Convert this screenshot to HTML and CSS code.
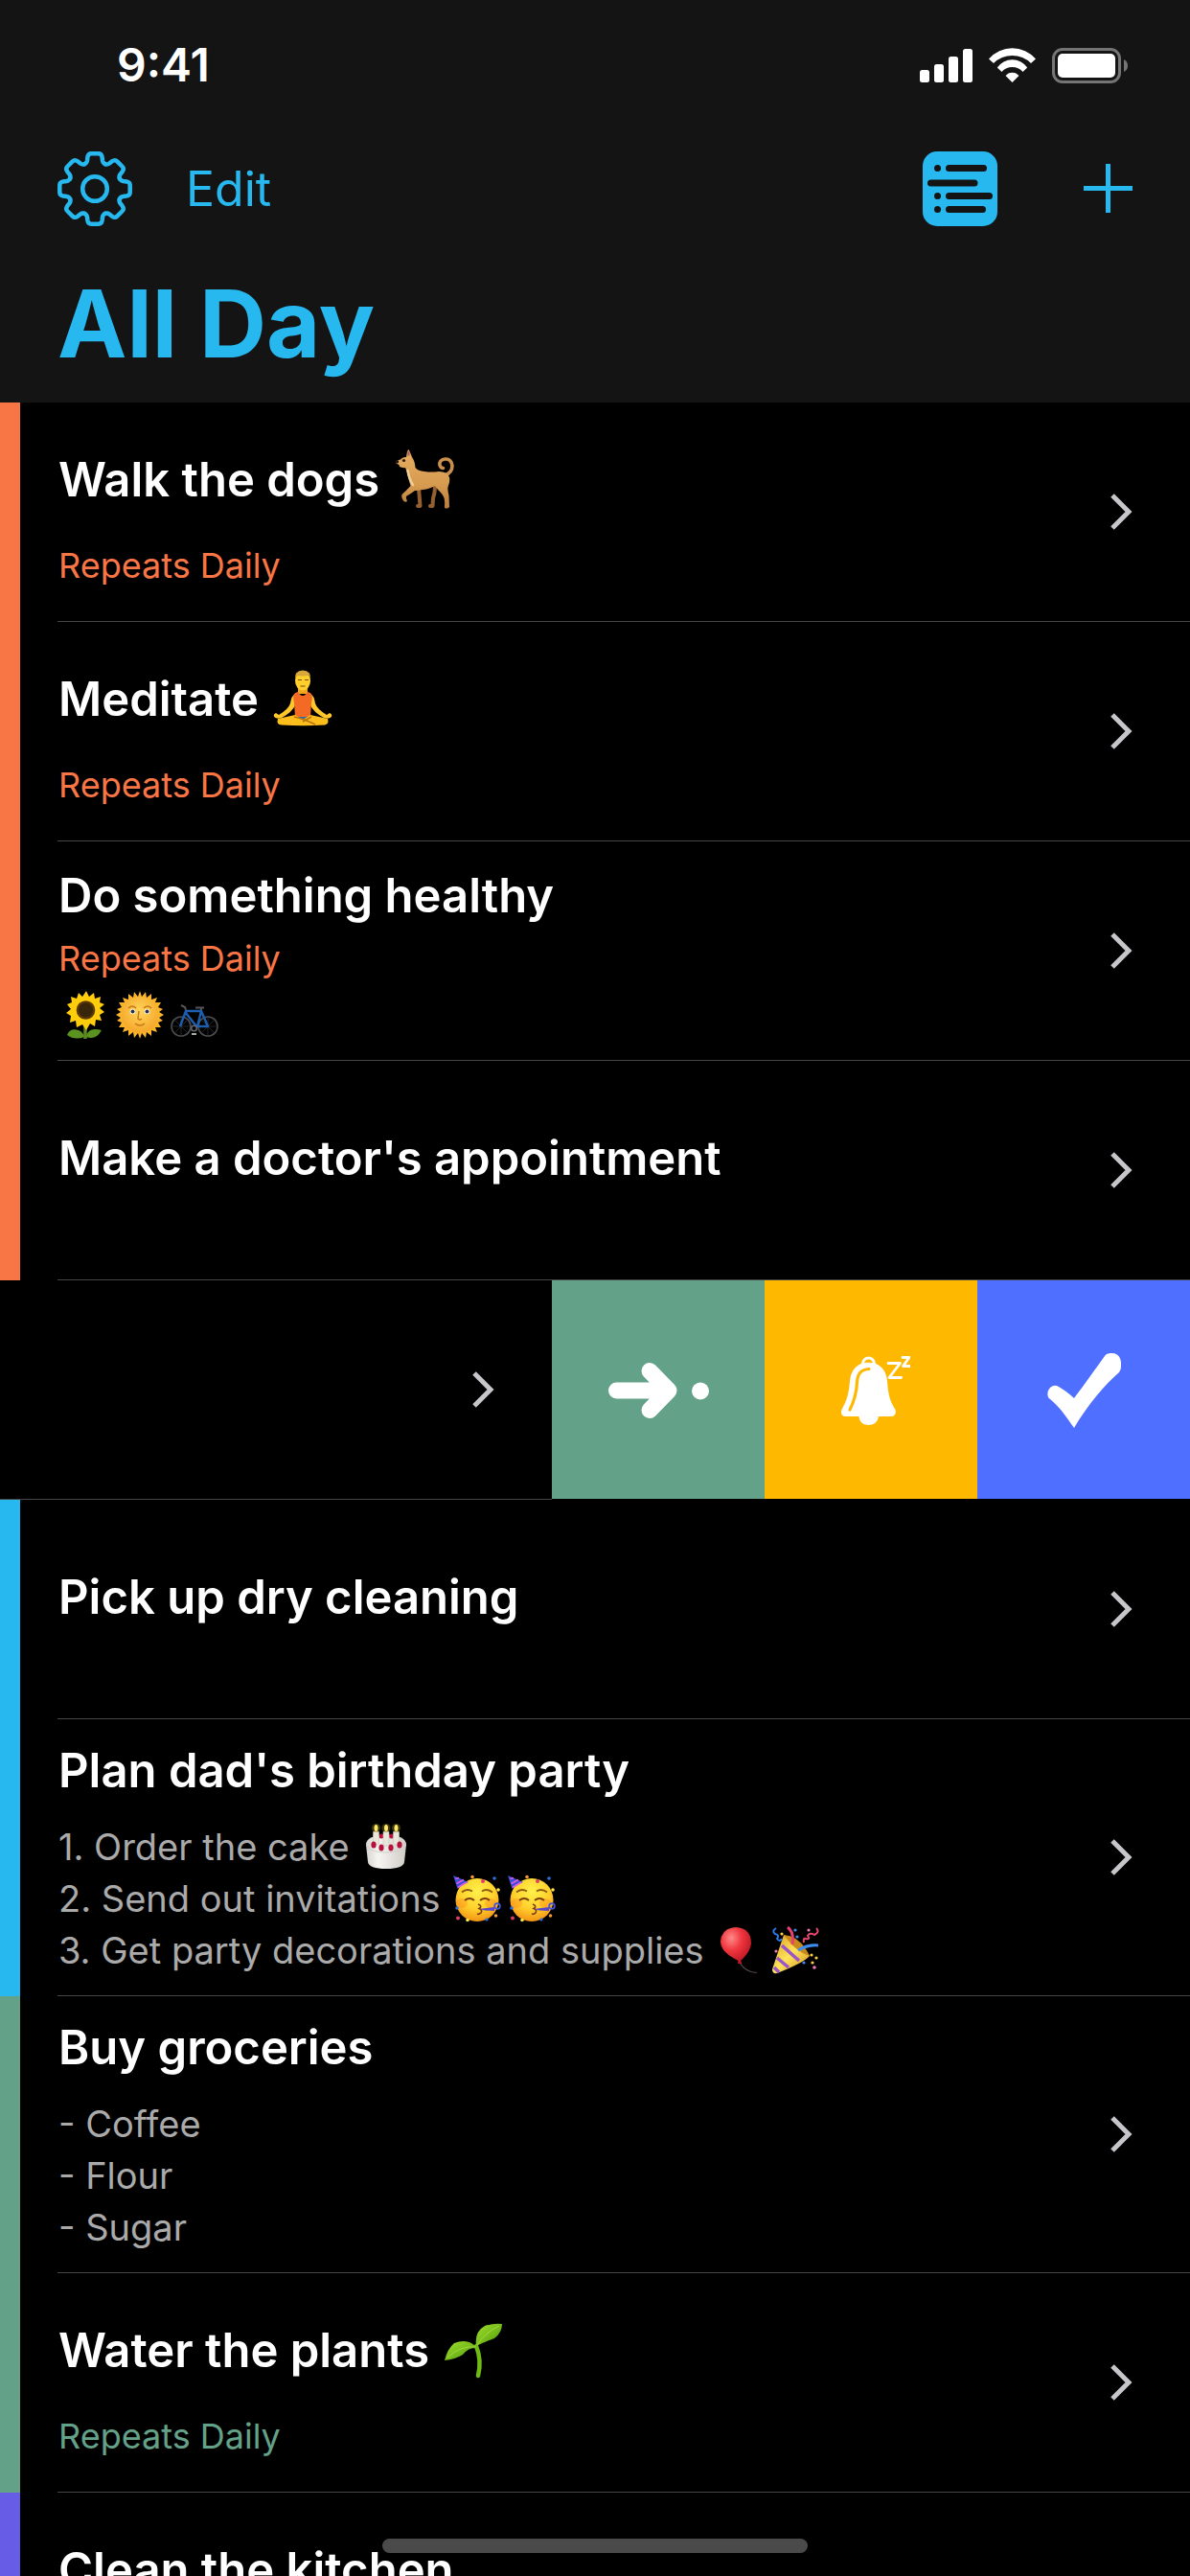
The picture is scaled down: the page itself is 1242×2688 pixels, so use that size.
FILE: index.html
```html
<!DOCTYPE html>
<html lang="en">
<head>
<meta charset="utf-8">
<meta name="viewport" content="width=device-width, initial-scale=1">
<title>All Day</title>
<link rel="stylesheet" href="styles.css">
</head>
<body>
<svg class="sprite" aria-hidden="true">
  <defs>
    <symbol id="chevron" viewBox="0 0 24 40">
      <path d="M3 3 L20 20 L3 37" fill="none" stroke="#c7c7cb" stroke-width="5"/>
    </symbol>
    <g id="gear-tooth">
      <path d="M-10.8 -25.8 C-9 -26.6 -8.3 -27.5 -8 -29.5 L-7.6 -33 Q-7 -36.7 -3.8 -36.7 H3.8 Q7 -36.7 7.6 -33 L8 -29.5 C8.3 -27.5 9 -26.6 10.8 -25.8"/>
    </g>
    <radialGradient id="skin" cx=".5" cy=".3" r=".75">
      <stop offset="0" stop-color="#fff04a"/><stop offset=".55" stop-color="#ffd02c"/><stop offset="1" stop-color="#f28a12"/>
    </radialGradient>
    <linearGradient id="fur" x1="0" y1="0" x2="0" y2="1">
      <stop offset="0" stop-color="#e5ae62"/><stop offset=".6" stop-color="#d79b50"/><stop offset="1" stop-color="#b87b3c"/>
    </linearGradient>
    <linearGradient id="leaf" x1="0" y1="0" x2="1" y2="1">
      <stop offset="0" stop-color="#a3e02c"/><stop offset="1" stop-color="#4c9a0c"/>
    </linearGradient>
    <radialGradient id="balloon-red" cx=".35" cy=".3" r=".75">
      <stop offset="0" stop-color="#ff8a8a"/><stop offset=".45" stop-color="#f0373f"/><stop offset="1" stop-color="#b91423"/>
    </radialGradient>
    <radialGradient id="sun-face" cx=".5" cy=".4" r=".6">
      <stop offset="0" stop-color="#ffd65a"/><stop offset="1" stop-color="#f5a62a"/>
    </radialGradient>
    <linearGradient id="icing" x1="0" y1="0" x2="1" y2="0">
      <stop offset="0" stop-color="#d6d3cf"/><stop offset=".3" stop-color="#f6f5f2"/><stop offset="1" stop-color="#cfccc6"/>
    </linearGradient>
    <linearGradient id="cone" x1="0" y1="0" x2="1" y2="1">
      <stop offset="0" stop-color="#d99a1e"/><stop offset=".5" stop-color="#ffe35a"/><stop offset="1" stop-color="#d28c1c"/>
    </linearGradient>
    <symbol id="partying" viewBox="0 0 50 50">
      <ellipse cx="25" cy="26.500" rx="22.500" ry="22.500" fill="url(#skin)"/>
      <ellipse cx="9" cy="30" rx="6" ry="5" fill="#ff8a1c" opacity=".4"/>
      <ellipse cx="39" cy="30" rx="6" ry="5" fill="#ff8a1c" opacity=".4"/>
      <path d="M0 1 L16 8 Q8 11 4.500 15 Z" fill="#3b4fd8"/>
      <path d="M2.500 4.500 L6 3.500 M3.500 9.500 L11 5.500 M5 13.500 L14 8" stroke="#e05be0" stroke-width="1.800"/>
      <path d="M9 18.500 Q14 14 20 17.500 M30 17.500 Q35 14 41 18.500" fill="none" stroke="#8a5a12" stroke-width="1.800"/>
      <path d="M12 27 Q17 23 22 27 M28 27 Q33 23 38 27" fill="none" stroke="#7a3d0c" stroke-width="2"/>
      <path d="M26 31 Q31 33 27 35.500 Q31 37 29 40 Q27 42 25 41" fill="none" stroke="#7a3d0c" stroke-width="1.600"/>
      <path d="M27 36 L43 34 V38 L33 37.500 Z" fill="#5a46c8"/>
      <circle cx="46" cy="33" r="2.800" fill="none" stroke="#4656d8" stroke-width="1.800"/>
      <g fill="#e03c6a"><circle cx="31" cy="7" r="2"/><circle cx="5" cy="45.500" r="2"/></g>
      <g fill="#2d6fe0"><circle cx="43" cy="4" r="1.800"/><circle cx="4" cy="35" r="1.800"/><circle cx="35" cy="47" r="1.600"/></g>
      <g fill="#ffe84a"><circle cx="47" cy="16" r="1.800"/><circle cx="15" cy="47.500" r="1.800"/></g>
      <g fill="#f59a35"><circle cx="20" cy="2.500" r="1.800"/><circle cx="44.500" cy="43" r="1.800"/></g>
    </symbol>
  </defs>
</svg>

<div class="screen">
  <header class="header">
    <div class="status">
      <time class="status__time">9:41</time>
      <div class="status__icons">
        <svg width="55" height="37" viewBox="0 0 55 37" fill="#fff" role="img" aria-label="Signal">
          <rect x="0" y="23" width="10" height="13" rx="2.500"/><rect x="15" y="17" width="10" height="19" rx="2.500"/>
          <rect x="30" y="9" width="10" height="27" rx="2.500"/><rect x="45" y="1" width="10" height="35" rx="2.500"/>
        </svg>
        <svg width="49" height="37" viewBox="0 0 49 37" fill="#fff" role="img" aria-label="Wi-Fi">
          <path d="M0 11.500 A32.500 32.500 0 0 1 49 11.500 L44 16 A27.800 27.800 0 0 0 5 16 Z"/>
          <path d="M8.800 20.500 A19 19 0 0 1 40.200 20.500 L35.500 25 A14.600 14.600 0 0 0 13.500 25 Z"/>
          <path d="M17.500 29 A9 9 0 0 1 31.500 29 L24.500 36 Z"/>
        </svg>
        <svg width="79" height="37" viewBox="0 0 79 37" role="img" aria-label="Battery">
          <rect x="1.500" y="1.500" width="69" height="34" rx="9.500" fill="none" stroke="#757575" stroke-width="3"/>
          <rect x="6" y="6" width="60" height="25" rx="5" fill="#fff"/>
          <path d="M75 12 Q79 14 79 18.500 Q79 23 75 25 Z" fill="#757575"/>
        </svg>
      </div>
    </div>
    <nav class="toolbar">
      <button class="tool" aria-label="Settings">
        <svg width="78" height="78" viewBox="-39 -39 78 78" fill="none" stroke="currentColor" stroke-width="4.500" stroke-linecap="round">
          <use href="#gear-tooth"/><use href="#gear-tooth" transform="rotate(45)"/><use href="#gear-tooth" transform="rotate(90)"/><use href="#gear-tooth" transform="rotate(135)"/><use href="#gear-tooth" transform="rotate(180)"/><use href="#gear-tooth" transform="rotate(225)"/><use href="#gear-tooth" transform="rotate(270)"/><use href="#gear-tooth" transform="rotate(315)"/>
          <circle r="12.800"/>
        </svg>
      </button>
      <button class="tool tool--text">Edit</button>
      <button class="tool tool--list" aria-label="List view">
        <svg width="78" height="78" viewBox="0 0 78 78" fill="#141414">
          <rect width="78" height="78" rx="15" fill="currentColor"/>
          <circle cx="15.500" cy="17.500" r="3.500"/><rect x="24" y="14" width="43" height="7" rx="3.500"/>
          <rect x="5" y="29.500" width="52.500" height="7" rx="3.500"/>
          <circle cx="15.500" cy="46.500" r="3.500"/><rect x="24" y="43" width="49" height="7" rx="3.500"/>
          <circle cx="15.500" cy="60.500" r="3.500"/><rect x="24" y="57" width="42" height="7" rx="3.500"/>
        </svg>
      </button>
      <button class="tool" aria-label="Add">
        <svg width="51" height="78" viewBox="0 0 51 78" fill="currentColor">
          <rect x="0" y="36" width="51" height="5"/><rect x="23" y="13" width="5" height="51"/>
        </svg>
      </button>
    </nav>
    <h1 class="heading">All Day</h1>
  </header>

  <main>
    <ul class="tasks">
      <li class="task task--orange">
        <a class="task__link" href="#walk">
          <div class="task__body task__body--repeat">
            <h2 class="task__title">Walk the dogs
              <svg class="emoji" viewBox="0 0 62 62" role="img" aria-label="dog">
                <path d="M42 38 Q42 46 40 51 L39.500 59 H37 M25 40 L26.500 59 H24" fill="none" stroke="#94602f" stroke-width="4" stroke-linecap="round" stroke-linejoin="round"/>
                <path d="M52.500 27 Q60 24 60 17 Q59 9.500 52.500 10 Q46 11 47 16.500 Q48 19.500 50.500 19.500" fill="none" stroke="#c98f4b" stroke-width="3.600" stroke-linecap="round"/>
                <path d="M12 8 L13 2 L14.500 0 L16 3 L18 8 Q21 12 21.500 19 Q24 22.500 31 23 Q38 24 46 23 Q55 23 57 29 Q58 34 55.500 39 Q55 43 56.500 48 L57 60 Q55 62.500 52 61 L52 58 Q53 50 48 45 Q44 41 42 38 Q34 42 29 42 Q24 43 21 43 Q17 46 12.500 48.500 Q11 50 13 53.500 Q12 56 9 53.500 Q6 49 8 46.500 Q12 43 16.500 38 Q15 33 13.500 27 Q12.500 22 11 19 Q8 19.500 5 18 L4.500 16 L1.500 14.500 Q.5 12.500 2 11.500 L6 10.500 Q8 7.500 12 8 Z" fill="url(#fur)"/>
                <path d="M13.500 22 Q15 31 19 37" fill="none" stroke="#efcf98" stroke-width="2.500" stroke-linecap="round"/>
                <path d="M14.500 6.500 L14.500 2" stroke="#a9566a" stroke-width="2"/>
                <circle cx="9.500" cy="11.500" r="1.600" fill="#2a1a10"/><circle cx="2.500" cy="12.800" r="1.700" fill="#1c1410"/>
              </svg>
            </h2>
            <p class="task__repeat">Repeats Daily</p>
          </div>
          <svg class="chevron" aria-hidden="true"><use href="#chevron"/></svg>
        </a>
      </li>
      <li class="task task--orange">
        <a class="task__link" href="#meditate">
          <div class="task__body task__body--repeat">
            <h2 class="task__title">Meditate
              <svg class="emoji" viewBox="0 0 62 62" role="img" aria-label="person meditating">
                <path d="M23 26 Q19 28 18 36 Q16 42 6 48 L3 46 Q0 47 1 50 Q4 53 9 51 Q20 45 23 38 Z M39 26 Q43 28 44 36 Q46 42 56 48 L59 46 Q62 47 61 50 Q58 53 53 51 Q42 45 39 38 Z" fill="#ffc72a"/>
                <path d="M26 18 H36 V26 H26 Z" fill="#f0a51a"/>
                <ellipse cx="31" cy="12.500" rx="8" ry="10" fill="#ffd02c"/>
                <path d="M23 10 Q22 2 31 1.500 Q40 2 39 10 L37.500 6.500 Q33 8 24.500 7 Z" fill="#d9a83a"/>
                <path d="M26 11.500 h4 M33 11.500 h4 M28.500 18 h5" stroke="#7a4a0c" stroke-width="1.200"/>
                <path d="M23 25 L26 24 Q31 32 36 24 L39 25 Q42 28 40 35 L39 51 H23 L22 35 Q20 28 23 25 Z" fill="#f26a24"/>
                <path d="M25 50 H37 L33 56 H29 Z" fill="#2a6fb4"/>
                <path d="M23 48 L5 52 Q3 58 9 58.500 Q31 60 54 58.500 Q59 57 57 52 L39 48 L31 53 Z" fill="#fcbd1d"/>
                <path d="M22 50 Q32 52 44 58 M40 50 L31 55" fill="none" stroke="#b8720c" stroke-width="1.500"/>
              </svg>
            </h2>
            <p class="task__repeat">Repeats Daily</p>
          </div>
          <svg class="chevron" aria-hidden="true"><use href="#chevron"/></svg>
        </a>
      </li>
      <li class="task task--orange">
        <a class="task__link" href="#healthy">
          <div class="task__body task__body--stacked">
            <h2 class="task__title">Do something healthy</h2>
            <p class="task__repeat">Repeats Daily</p>
            <p class="task__emojis">
              <svg class="emoji emoji--small" viewBox="0 0 50 50" role="img" aria-label="sunflower">
                <path d="M25 36 V50" stroke="#5d8a1c" stroke-width="3.500"/>
                <path d="M24 48 Q14 52 6 46 Q9 38 18 41 Q23 43 24 48 Z M26 48 Q36 52 42 41 Q32 38 28 43 Q26 45 26 48 Z" fill="#5b9321"/>
                <path d="M26 0 L29 6 L34 2 L35 8 L41 6 L40 12 L45 14 L40 18 L45 22 L40 25 L42 31 L36 30 L35 37 L30 34 L26 41 L22 35 L16 38 L15 31 L9 33 L10 26 L5 23 L10 19 L6 14 L11 12 L10 6 L16 8 L18 2 L22 6 Z" fill="#ffcd0c"/>
                <circle cx="25.500" cy="20" r="9.800" fill="#5a3906"/><circle cx="25.500" cy="20" r="7.500" fill="#37260a"/>
              </svg><svg class="emoji emoji--small" viewBox="0 0 50 50" role="img" aria-label="sun with face">
                <path d="M25 0 L27 6 L31 1 L32 7 L37 3 L37 9 L43 7 L41 12 L47 12 L44 17 L49 19 L45 22 L50 25 L45 28 L49 31 L44 33 L47 38 L41 38 L43 43 L37 41 L37 47 L32 43 L31 49 L27 44 L25 50 L23 44 L19 49 L18 43 L13 47 L13 41 L7 43 L9 38 L3 38 L6 33 L1 31 L5 28 L0 25 L5 22 L1 19 L6 17 L3 12 L9 12 L7 7 L13 9 L13 3 L18 7 L19 1 L23 6 Z" fill="#fbb429"/>
                <circle cx="25" cy="25" r="19" fill="url(#sun-face)"/>
                <path d="M13 18 Q17 14 21 18 M29 18 Q33 14 37 18 M24 21 L23 29 Q25 31 27 29 M20 34 Q25 38 30 34" fill="none" stroke="#c9771a" stroke-width="1.500"/>
                <circle cx="17.500" cy="21.500" r="2.800" fill="#fff"/><circle cx="32.500" cy="21.500" r="2.800" fill="#fff"/>
                <circle cx="17.500" cy="21.500" r="2" fill="#26324c"/><circle cx="32.500" cy="21.500" r="2" fill="#26324c"/>
              </svg><svg class="emoji emoji--small" viewBox="0 0 50 50" role="img" aria-label="bicycle">
                <g fill="none" stroke="#4c4d50" stroke-width="1.600"><circle cx="11" cy="37" r="10"/><circle cx="39" cy="37" r="10"/></g>
                <path d="M11 27 V47 M1 37 H21 M4 30 L18 44 M18 30 L4 44 M39 27 V47 M29 37 H49 M32 30 L46 44 M46 30 L32 44" stroke="#333437" stroke-width=".7"/>
                <path d="M10 37 L16 21 H32 L39 37 H28 L32 21 M27 37 L16 23" fill="none" stroke="#1c5fb0" stroke-width="2.400" stroke-linejoin="round"/>
                <path d="M16 20 L15 17 L11 15 M26 17.500 H35 M32 20 L32 17" stroke="#55565a" stroke-width="2" fill="none"/>
                <circle cx="24.500" cy="39" r="2.800" fill="none" stroke="#66676a" stroke-width="1.500"/>
                <path d="M22 45 h5" stroke="#aaa" stroke-width="2"/>
              </svg>
            </p>
          </div>
          <svg class="chevron" aria-hidden="true"><use href="#chevron"/></svg>
        </a>
      </li>
      <li class="task task--orange">
        <a class="task__link" href="#doctor">
          <div class="task__body task__body--single">
            <h2 class="task__title">Make a doctor's appointment</h2>
          </div>
          <svg class="chevron" aria-hidden="true"><use href="#chevron"/></svg>
        </a>
      </li>
      <li class="swipe">
        <a class="swipe__link" href="#details" aria-label="Details">
          <svg class="chevron" aria-hidden="true"><use href="#chevron"/></svg>
        </a>
        <div class="swipe__actions">
          <button class="action action--green" aria-label="Move">
            <svg width="105" height="60" viewBox="0 0 105 60" fill="none" stroke="#fff" stroke-width="17" stroke-linecap="round" stroke-linejoin="round">
              <path d="M8.500 30 H60 M43 9.500 L63 30 L43 50.500"/>
              <circle cx="96" cy="30.500" r="9" fill="#fff" stroke="none"/>
            </svg>
          </button>
          <button class="action action--yellow" aria-label="Snooze">
            <svg width="82" height="72" viewBox="-10 0 82 72">
              <circle cx="28.500" cy="8" r="6" fill="none" stroke="#fff" stroke-width="3"/>
              <path d="M28.500 6.500 C40 7 47 14 48 26 C49 42 52 49 56.500 56 C58 60 55 63 53 63 H39 C38 69 34 72 28.500 72 C23 72 19 69 18.500 63 H4 C1 63 -1 60 .5 56 C6 46 8 39 9 26 C10 14 17 7 28.500 6.500 Z" fill="#fff"/>
              <path d="M29 13.500 C20 14 17 19 16.500 27 C16 40 13 48 9 56" fill="none" stroke="#ffb800" stroke-width="3.200" stroke-linecap="round"/>
              <path d="M25 8 A4 4 0 0 1 32 8 Q28.500 5 25 8 Z" fill="#ffb800"/>
              <path d="M49 7.500 H61.500 L50 22.500 H62.500 M64 1.500 H71 L64.500 10.500 H71.500" fill="none" stroke="#fff" stroke-width="2.800" stroke-linejoin="round" stroke-linecap="round"/>
            </svg>
          </button>
          <button class="action action--blue" aria-label="Complete">
            <svg width="77" height="78" viewBox="0 0 77 78" fill="#fff">
              <path d="M12 35 C17 38 23 42 28 47 C38 34 52 14 60 3 C62 0 65 0 68 0 C74 0 77 5 77 11 C77 15 77 17 75 20 C60 33 43 53 28 78 C21 68 13 56 3 48 C0 46 0 42 1 39 C3 35 7 32 12 35 Z"/>
            </svg>
          </button>
        </div>
      </li>
      <li class="task task--sky">
        <a class="task__link" href="#cleaning">
          <div class="task__body task__body--single">
            <h2 class="task__title">Pick up dry cleaning</h2>
          </div>
          <svg class="chevron" aria-hidden="true"><use href="#chevron"/></svg>
        </a>
      </li>
      <li class="task task--sky">
        <a class="task__link" href="#birthday">
          <div class="task__body task__body--notes">
            <h2 class="task__title">Plan dad's birthday party</h2>
            <p class="task__notes">1. Order the cake
              <svg class="emoji emoji--small" viewBox="0 0 50 50" role="img" aria-label="birthday cake">
                <path d="M4 23 Q4 13 25 13 Q46 13 46 23 L44 41 Q43 48 25 48 Q7 48 6 41 Z" fill="url(#icing)"/>
                <path d="M4 23 Q8 31 25 31 Q42 31 46 23" fill="none" stroke="#d3cfc9" stroke-width="1"/>
                <g fill="#b5133c"><circle cx="20" cy="14" r="2.500"/><circle cx="30.500" cy="14" r="2.500"/></g>
                <g fill="#e9e6da" stroke="#c9c5b8" stroke-width=".6"><rect x="11.500" y="9" width="6" height="14" rx="1"/><rect x="22" y="9" width="6" height="15" rx="1"/><rect x="32.500" y="9" width="6" height="14" rx="1"/></g>
                <g fill="#b5133c"><ellipse cx="12" cy="23" rx="2.600" ry="3.600"/><ellipse cx="20" cy="26" rx="2.600" ry="3.500"/><ellipse cx="30" cy="26" rx="2.600" ry="3.500"/><ellipse cx="39" cy="23" rx="2.600" ry="3.600"/></g>
                <g fill="#8a7a1c" opacity=".45"><circle cx="14.500" cy="5.500" r="4.500"/><circle cx="25" cy="5.500" r="4.500"/><circle cx="35.500" cy="5.500" r="4.500"/></g>
                <g fill="#ffe96a"><ellipse cx="14.500" cy="5.500" rx="2" ry="3.500"/><ellipse cx="25" cy="5.500" rx="2" ry="3.500"/><ellipse cx="35.500" cy="5.500" rx="2" ry="3.500"/></g>
              </svg><br>
              2. Send out invitations
              <svg class="emoji emoji--small" role="img" aria-label="partying face"><use href="#partying"/></svg><svg class="emoji emoji--small" role="img" aria-label="partying face"><use href="#partying"/></svg><br>
              3. Get party decorations and supplies
              <svg class="emoji emoji--small" viewBox="0 0 50 50" role="img" aria-label="balloon">
                <path d="M24 38 Q30 48 42 48.500" fill="none" stroke="#5c4a4c" stroke-width="1.200"/>
                <path d="M20 1 Q36 2 36 18 Q35 27 25 36 L26.500 39 L22 39 L22.500 36 Q4 27 4 16 Q5 2 20 1 Z" fill="url(#balloon-red)"/>
              </svg><svg class="emoji emoji--small" viewBox="0 0 50 50" role="img" aria-label="party popper">
                <path d="M13 9 Q28 14 40 31 Q34 38 6 49 Q1 50 1 45 Z" fill="url(#cone)"/>
                <path d="M11 20 L29 36 M6 33 L18 43 M3 43 L8 48" stroke="#9a55c8" stroke-width="3.500"/>
                <path d="M13 9 Q30 10 40 31 Q26 27 13 9 Z" fill="#c98a1a"/>
                <path d="M17 1 Q24 6 22 19" fill="none" stroke="#ea3f72" stroke-width="3"/>
                <path d="M28 25 Q38 19 49 20" fill="none" stroke="#3f8cf0" stroke-width="3"/>
                <path d="M5 2 Q0 5 4 8 Q9 9 6 13 Q9 17 11 13" fill="none" stroke="#2d7be8" stroke-width="2"/>
                <path d="M47 2 Q51 6 45 9 Q40 6 38 10 Q41 14 36 13 Q33 12 34 17" fill="none" stroke="#e5486f" stroke-width="2"/>
                <g fill="#3f8cf0"><circle cx="25" cy="4" r="1.600"/><circle cx="27" cy="11" r="1.600"/><circle cx="34" cy="38" r="1.600"/></g>
                <g fill="#ffd23c"><circle cx="11" cy="8" r="1.600"/><circle cx="42" cy="30" r="1.600"/><circle cx="47" cy="33" r="1.600"/><circle cx="43" cy="38" r="1.600"/></g>
                <g fill="#f07ab0"><circle cx="39" cy="4" r="1.600"/><circle cx="45" cy="43" r="1.800"/><circle cx="5" cy="26" r="1.600"/></g>
              </svg>
            </p>
          </div>
          <svg class="chevron" aria-hidden="true"><use href="#chevron"/></svg>
        </a>
      </li>
      <li class="task task--green">
        <a class="task__link" href="#groceries">
          <div class="task__body task__body--notes">
            <h2 class="task__title">Buy groceries</h2>
            <p class="task__notes">- Coffee<br>- Flour<br>- Sugar</p>
          </div>
          <svg class="chevron" aria-hidden="true"><use href="#chevron"/></svg>
        </a>
      </li>
      <li class="task task--green">
        <a class="task__link" href="#plants">
          <div class="task__body task__body--repeat">
            <h2 class="task__title">Water the plants
              <svg class="emoji" viewBox="0 0 62 62" role="img" aria-label="seedling">
                <path d="M34 27 Q40 42 36 58" fill="none" stroke="#6fbb14" stroke-width="4.500" stroke-linecap="round"/>
                <path d="M34 27 Q32 12 43 6 Q52 3 61 4 Q61 13 53 19 Q44 22 34 27 Z" fill="url(#leaf)"/>
                <path d="M35 29 Q26 18 11 24 Q4 30 1 42 Q12 41 20 36 Q26 28 35 29 Z" fill="url(#leaf)"/>
                <path d="M35 26 Q43 13 58 6 M34 28 Q18 26 4 39" fill="none" stroke="#c0ea55" stroke-width="1" opacity=".6"/>
              </svg>
            </h2>
            <p class="task__repeat">Repeats Daily</p>
          </div>
          <svg class="chevron" aria-hidden="true"><use href="#chevron"/></svg>
        </a>
      </li>
      <li class="task task--purple">
        <a class="task__link" href="#kitchen">
          <div class="task__body task__body--repeat">
            <h2 class="task__title">Clean the kitchen</h2>
          </div>
        </a>
      </li>
    </ul>
  </main>
  <div class="home-indicator"></div>
</div>
</body>
</html>
```
FILE: styles.css
```css
* {
  box-sizing: border-box;
}

body,
h1,
h2,
p,
ul {
  margin: 0;
  padding: 0;
}

body {
  background: #000;
  color: #fff;
  font-family: Inter, "Liberation Sans", sans-serif;
}

button {
  margin: 0;
  padding: 0;
  border: 0;
  background: none;
  color: inherit;
  font: inherit;
  cursor: pointer;
}

a {
  color: inherit;
  text-decoration: none;
}

svg {
  display: block;
  flex: none;
}

.sprite {
  position: absolute;
  width: 0;
  height: 0;
}

.screen {
  position: relative;
  height: 100vh;
  overflow: hidden;
}

/* Header */

.header {
  height: 420px;
  padding: 38px 60px 0;
  background: #141414;
  color: #26b8ef;
}

.status {
  display: flex;
  align-items: center;
  justify-content: space-between;
  height: 60px;
  padding-left: 62px;
  color: #fff;
}

.status__time {
  font-size: 48px;
  font-weight: 600;
  line-height: 60px;
}

.status__icons {
  display: flex;
  gap: 17px;
  margin-right: 5px;
}

.toolbar {
  display: flex;
  align-items: center;
  margin-top: 60px;
}

.tool {
  display: block;
}

.tool--text {
  margin-left: 56px;
  font-size: 50px;
  line-height: 78px;
}

.tool--list {
  margin-left: auto;
  margin-right: 90px;
}

.heading {
  margin-top: 40px;
  font-size: 97px;
  font-weight: 700;
  line-height: 124px;
}

/* Task rows */

.tasks {
  list-style: none;
}

.task {
  padding-left: 39px;
  border-left: 21px solid;
}

.task--orange {
  border-left-color: #f87645;
}

.task--sky {
  border-left-color: #26b8ef;
}

.task--green {
  border-left-color: #63a188;
}

.task--purple {
  border-left-color: #665ce6;
}

.task__link {
  display: flex;
  align-items: center;
  justify-content: space-between;
  min-height: 229px;
  padding-right: 60px;
  border-bottom: 1px solid #464646;
}

.task__body {
  display: flex;
  flex-direction: column;
  align-self: flex-start;
  padding-left: 1px;
}

.task__body--repeat {
  gap: 34px;
  padding-top: 48px;
}

.task__body--stacked {
  gap: 10px;
  padding-top: 24px;
}

.task__body--single {
  padding-top: 69px;
}

.task__body--notes {
  gap: 19px;
  padding-top: 21px;
  padding-bottom: 20px;
}

.task__title {
  font-size: 49px;
  font-weight: 600;
  line-height: 66px;
}

.task__repeat {
  font-size: 36px;
  line-height: 44px;
}

.task--orange .task__repeat {
  color: #f87645;
}

.task--green .task__repeat {
  color: #63a188;
}

.task__notes,
.task__emojis {
  color: #aaa;
  font-size: 38px;
  line-height: 54px;
}

.emoji {
  display: inline-block;
  width: 62px;
  height: 62px;
  margin-left: 3px;
  vertical-align: -13px;
}

.emoji--small {
  width: 50px;
  height: 50px;
  margin-right: 4px;
  vertical-align: -11px;
}

.chevron {
  width: 24px;
  height: 40px;
}

/* Row swiped open */

.swipe {
  display: flex;
  height: 229px;
}

.swipe__link {
  display: flex;
  flex: 1;
  align-items: center;
  justify-content: flex-end;
  padding-right: 60px;
  border-bottom: 1px solid #464646;
}

.swipe__actions {
  display: flex;
  padding-bottom: 1px;
}

.action {
  display: flex;
  align-items: center;
  justify-content: center;
  width: 222px;
  padding-top: 2px;
}

.action--green {
  background: #63a188;
}

.action--yellow {
  background: #ffb800;
}

.action--blue {
  background: #4e6fff;
}

.home-indicator {
  position: absolute;
  bottom: 24px;
  left: 50%;
  width: 444px;
  height: 15px;
  margin-left: -222px;
  border-radius: 8px;
  background: #4a4a4a;
}
```
